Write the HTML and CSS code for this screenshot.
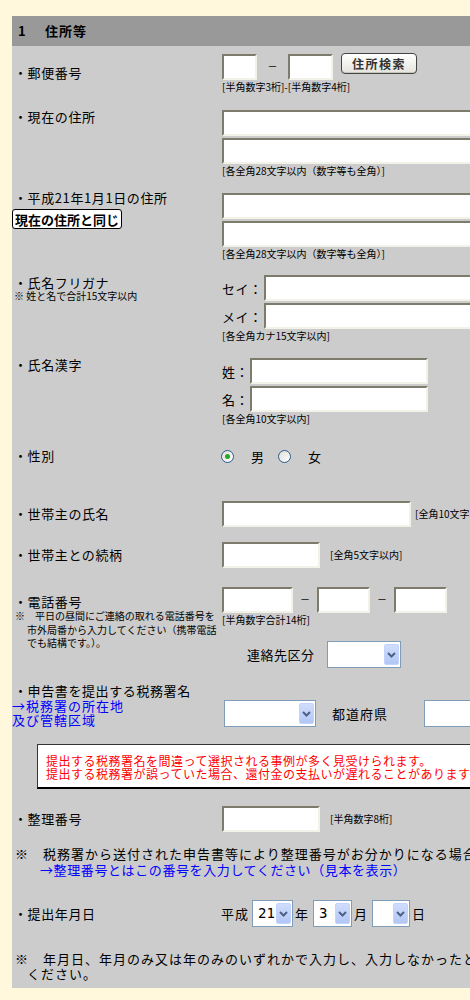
FILE: index.html
```html
<!DOCTYPE html>
<html lang="ja">
<head>
    <meta charset="UTF-8">
    <meta name="viewport" content="width=device-width, initial-scale=1.0">
    <title>住所等</title>
    <link rel="stylesheet" href="styles.css">
</head>
<body>

    <div class="panel">
        <div class="panel-head"><span class="num">1</span>住所等</div>

        <!-- 郵便番号 -->
        <div class="row r-zip">
            <div class="lbl mid">・郵便番号</div>
            <div class="fld">
                <div class="line">
                    <input type="text" class="txt zip1">
                    <span class="dash zip-dash">－</span>
                    <input type="text" class="txt zip2">
                    <button type="button" class="btn-search">住所検索</button>
                </div>
                <div class="hint">[半角数字3桁]-[半角数字4桁]</div>
            </div>
        </div>

        <!-- 現在の住所 -->
        <div class="row r-addr">
            <div class="lbl">・現在の住所</div>
            <div class="fld">
                <input type="text" class="txt full">
                <input type="text" class="txt full second">
                <div class="hint">[各全角28文字以内（数字等も全角）]</div>
            </div>
        </div>

        <!-- 平成21年1月1日の住所 -->
        <div class="row r-addr2">
            <div class="lbl">
                ・平成21年1月1日の住所
                <button type="button" class="btn-same">現在の住所と同じ</button>
            </div>
            <div class="fld">
                <input type="text" class="txt full">
                <input type="text" class="txt full second">
                <div class="hint">[各全角28文字以内（数字等も全角）]</div>
            </div>
        </div>

        <!-- 氏名フリガナ -->
        <div class="row r-kana">
            <div class="lbl">
                ・氏名フリガナ
                <div class="sub">※ 姓と名で合計15文字以内</div>
            </div>
            <div class="fld">
                <div class="pair"><span class="pair-lbl kana">セイ：</span><input type="text" class="txt full"></div>
                <div class="pair second"><span class="pair-lbl kana">メイ：</span><input type="text" class="txt full"></div>
                <div class="hint">[各全角カナ15文字以内]</div>
            </div>
        </div>

        <!-- 氏名漢字 -->
        <div class="row r-kanji">
            <div class="lbl">・氏名漢字</div>
            <div class="fld">
                <div class="pair"><span class="pair-lbl">姓：</span><input type="text" class="txt name"></div>
                <div class="pair second"><span class="pair-lbl">名：</span><input type="text" class="txt name"></div>
                <div class="hint">[各全角10文字以内]</div>
            </div>
        </div>

        <!-- 性別 -->
        <div class="row r-sex">
            <div class="lbl mid">・性別</div>
            <div class="fld radios">
                <span class="radio on"></span><span class="radio-txt">男</span>
                <span class="radio"></span><span class="radio-txt">女</span>
            </div>
        </div>

        <!-- 世帯主の氏名 -->
        <div class="row r-head">
            <div class="lbl mid">・世帯主の氏名</div>
            <div class="fld inline">
                <input type="text" class="txt head-name">
                <span class="hint side near">[全角10文字以内]</span>
            </div>
        </div>

        <!-- 世帯主との続柄 -->
        <div class="row r-rel">
            <div class="lbl mid">・世帯主との続柄</div>
            <div class="fld inline">
                <input type="text" class="txt short">
                <span class="hint side">[全角5文字以内]</span>
            </div>
        </div>

        <!-- 電話番号 -->
        <div class="row r-tel">
            <div class="lbl">
                ・電話番号
                <div class="tel-note">※　平日の昼間にご連絡の取れる電話番号を<br>市外局番から入力してください（携帯電話<br>でも結構です。）。</div>
            </div>
            <div class="fld">
                <div class="line">
                    <input type="text" class="txt tel1">
                    <span class="dash tel-dash">－</span>
                    <input type="text" class="txt tel2">
                    <span class="dash tel-dash">－</span>
                    <input type="text" class="txt tel2">
                </div>
                <div class="hint">[半角数字合計14桁]</div>
                <div class="contact">
                    <span class="contact-lbl">連絡先区分</span>
                    <div class="sel w74"><span class="val"></span><span class="arr"><svg width="9" height="6" viewBox="0 0 9 6"><path d="M1 1 L4.5 4.5 L8 1" fill="none" stroke="#4d6185" stroke-width="2"/></svg></span></div>
                </div>
            </div>
        </div>

        <!-- 税務署名 -->
        <div class="row r-office">
            <div class="lbl">
                ・申告書を提出する税務署名
                <a href="#" class="office-link">→税務署の所在地<br>及び管轄区域</a>
            </div>
            <div class="fld office">
                <div class="sel w92"><span class="val"></span><span class="arr"><svg width="9" height="6" viewBox="0 0 9 6"><path d="M1 1 L4.5 4.5 L8 1" fill="none" stroke="#4d6185" stroke-width="2"/></svg></span></div>
                <span class="pref-lbl">都道府県</span>
                <div class="sel w120"><span class="val"></span><span class="arr"><svg width="9" height="6" viewBox="0 0 9 6"><path d="M1 1 L4.5 4.5 L8 1" fill="none" stroke="#4d6185" stroke-width="2"/></svg></span></div>
            </div>
        </div>

        <div class="notice">
            提出する税務署名を間違って選択される事例が多く見受けられます。<br>
            提出する税務署が誤っていた場合、還付金の支払いが遅れることがありますのでご注意ください。
        </div>

        <!-- 整理番号 -->
        <div class="row r-ref">
            <div class="lbl mid">・整理番号</div>
            <div class="fld inline">
                <input type="text" class="txt short">
                <span class="hint side">[半角数字8桁]</span>
            </div>
        </div>

        <div class="wide-note ref-note">
            ※　税務署から送付された申告書等により整理番号がお分かりになる場合は入力してください。<br>
            <a href="#" class="ref-link">→整理番号とはこの番号を入力してください（見本を表示）</a>
        </div>

        <!-- 提出年月日 -->
        <div class="row r-date">
            <div class="lbl mid">・提出年月日</div>
            <div class="fld date">
                <span class="era">平成</span>
                <div class="sel w41"><span class="val">21</span><span class="arr"><svg width="9" height="6" viewBox="0 0 9 6"><path d="M1 1 L4.5 4.5 L8 1" fill="none" stroke="#4d6185" stroke-width="2"/></svg></span></div>
                <span class="unit">年</span>
                <div class="sel w39"><span class="val">3</span><span class="arr"><svg width="9" height="6" viewBox="0 0 9 6"><path d="M1 1 L4.5 4.5 L8 1" fill="none" stroke="#4d6185" stroke-width="2"/></svg></span></div>
                <span class="unit">月</span>
                <div class="sel w38"><span class="val"></span><span class="arr"><svg width="9" height="6" viewBox="0 0 9 6"><path d="M1 1 L4.5 4.5 L8 1" fill="none" stroke="#4d6185" stroke-width="2"/></svg></span></div>
                <span class="unit">日</span>
            </div>
        </div>

        <div class="wide-note date-note">
            ※　年月日、年月のみ又は年のみのいずれかで入力し、入力しなかったところは空欄にして<br>
            ください。
        </div>
    </div>

</body>
</html>
```

FILE: styles.css
```css
html {
    overflow-x: hidden;
}

body {
    margin: 0;
    padding: 16px 0 0 12px;
    background-color: #fff8dc;
    font-family: "Noto Sans CJK JP", sans-serif;
    font-size: 13px;
    color: #000;
}

.panel {
    width: 640px;
    background-color: #cccccc;
    padding-bottom: 7px;
}

.panel-head {
    height: 30px;
    line-height: 30px;
    background-color: #999999;
    font-weight: bold;
    padding-left: 6px;
    letter-spacing: 1px;
}

.panel-head .num {
    display: inline-block;
    width: 27px;
}

/* rows */
.row {
    display: flex;
}

.lbl {
    width: 210px;
    flex: none;
    box-sizing: border-box;
    padding-left: 2px;
    line-height: 16px;
    letter-spacing: 0.6px;
}

.lbl.mid {
    align-self: center;
}

.fld {
    flex: 1;
}

.fld.inline {
    display: flex;
    align-items: center;
}

.line {
    display: flex;
    align-items: flex-start;
    height: 27px;
}

.hint {
    font-size: 10px;
    line-height: 12px;
    margin-top: 1px;
}

.hint.side {
    margin-top: 0;
    margin-left: 10px;
}

.hint.side.near {
    margin-left: 4px;
}

/* text boxes */
.txt {
    display: block;
    box-sizing: border-box;
    height: 26px;
    margin: 0;
    padding: 2px 4px;
    border: 2px solid;
    border-color: #7c7b6c #f3f2e8 #f3f2e8 #7c7b6c;
    background: #fff;
    font-family: inherit;
    font-size: 13px;
}

.line .txt {
    margin-top: 1px;
}

.zip1 { width: 35px; }
.zip2 { width: 45px; }
.full { width: 300px; }
.name { width: 178px; }
.head-name { width: 189px; }
.short { width: 98px; }
.tel1 { width: 71px; }
.tel2 { width: 53px; }

.txt.second,
.pair.second {
    margin-top: 2px;
}

.dash {
    font-size: 10px;
    line-height: 26px;
    text-align: center;
}

.zip-dash {
    width: 31px;
}

.tel-dash {
    width: 24px;
}

.btn-search {
    width: 76px;
    height: 21px;
    margin-left: 8px;
    padding: 0;
    border: 1px solid #444;
    border-radius: 4px;
    background: linear-gradient(#ffffff, #e4e3dc);
    box-shadow: inset 0 -1px 0 #c8c7bd;
    font-family: inherit;
    font-size: 12px;
    font-weight: bold;
    letter-spacing: 1.5px;
    color: #333;
    line-height: 18px;
}

.btn-same {
    display: block;
    height: 20px;
    margin: 3px 0 0 -2px;
    padding: 0 2px;
    border: 1px solid #000;
    border-radius: 3px;
    background: #fff;
    font-family: inherit;
    font-size: 13px;
    font-weight: bold;
    line-height: 17px;
    color: #000;
    letter-spacing: 0;
}

/* row spacing */
.r-zip { margin-top: 7px; }

.r-addr { margin-top: 17px; }
.r-addr .lbl { margin-top: -1px; }

.r-addr2 { margin-top: 16px; }
.r-addr2 .lbl { margin-top: -3px; }

.r-kana { margin-top: 15px; }
.r-kana .lbl {
    margin-top: 1px;
    line-height: 14px;
}

.sub {
    font-size: 10px;
    line-height: 11px;
    letter-spacing: 0;
}

.pair {
    display: flex;
    align-items: center;
}

.pair-lbl {
    width: 28px;
    flex: none;
    letter-spacing: 0.5px;
}

.pair-lbl.kana {
    width: 42px;
}

.r-kanji { margin-top: 16px; }
.r-kanji .lbl { margin-top: -1px; }

.r-sex {
    margin-top: 21px;
    height: 20px;
}

.radios {
    display: flex;
    align-items: center;
}

.radio {
    width: 13px;
    height: 13px;
    box-sizing: border-box;
    margin-left: -1px;
    border: 1px solid #2a5d8f;
    border-radius: 50%;
    background: linear-gradient(135deg, #dedcd3, #ffffff);
    display: flex;
    align-items: center;
    justify-content: center;
}

.radio.on::after {
    content: "";
    width: 5px;
    height: 5px;
    border-radius: 50%;
    background: #27a627;
}

.radio-txt {
    margin-left: 17px;
    margin-right: 15px;
}

.r-head { margin-top: 35px; }
.r-rel { margin-top: 15px; }

.r-tel { margin-top: 18px; }
.r-tel .lbl {
    margin-top: 9px;
    line-height: 14px;
}

.tel-note {
    font-size: 10px;
    line-height: 13.5px;
    padding-left: 13px;
    text-indent: -12px;
    letter-spacing: 0;
}

.contact {
    display: flex;
    align-items: center;
    margin-top: 15px;
}

.contact-lbl {
    margin-left: 25px;
    margin-right: 12px;
    letter-spacing: 0.5px;
}

/* select boxes */
.sel {
    display: flex;
    justify-content: space-between;
    align-items: stretch;
    flex: none;
    height: 27px;
    box-sizing: border-box;
    padding: 2px 1px 2px 0;
    border: 1px solid #7f9db9;
    background: #fff;
}

.sel .val {
    padding-left: 5px;
    font-family: "DejaVu Sans Mono", monospace;
    font-size: 14px;
    line-height: 21px;
}

.sel .arr {
    width: 15px;
    box-sizing: border-box;
    border: 1px solid #c3d3fd;
    border-radius: 2px;
    background: linear-gradient(#d0ddfd, #b2c7f6);
    display: flex;
    align-items: center;
    justify-content: center;
}

.w38 { width: 38px; }
.w39 { width: 39px; }
.w41 { width: 41px; }
.w74 { width: 74px; }
.w92 { width: 92px; }
.w120 { width: 120px; }

.r-office { margin-top: 15px; }

.office-link {
    display: block;
    margin-left: -2px;
    line-height: 14px;
    color: #0000ff;
    text-decoration: none;
    letter-spacing: 1px;
}

.fld.office {
    display: flex;
    align-items: center;
    margin-top: 17px;
    padding-left: 2px;
}

.pref-lbl {
    margin: 0 36px 0 16px;
    letter-spacing: 1px;
}

.notice {
    margin: 17px 0 0 25px;
    padding: 9px 8px 7px;
    border-style: solid;
    border-width: 1px 2px 2px 1px;
    border-color: #333 #000 #000 #333;
    background: #fff;
    color: #ff0000;
    font-size: 12px;
    line-height: 13px;
    letter-spacing: 0.5px;
    white-space: nowrap;
}

.r-ref { margin-top: 17px; }

.wide-note {
    padding-left: 15px;
    text-indent: -12px;
    white-space: nowrap;
    letter-spacing: 1px;
}

.ref-note {
    margin-top: 14px;
    line-height: 16px;
}

.ref-link {
    margin-left: 13px;
    color: #0000ff;
    text-decoration: none;
    letter-spacing: 0.6px;
}

.r-date { margin-top: 22px; }

.fld.date {
    display: flex;
    align-items: center;
}

.era {
    margin-left: -1px;
    margin-right: 3px;
    letter-spacing: 1px;
}

.unit {
    margin: 0 5px 0 2px;
}

.date-note {
    margin-top: 24px;
    line-height: 15px;
}
```
